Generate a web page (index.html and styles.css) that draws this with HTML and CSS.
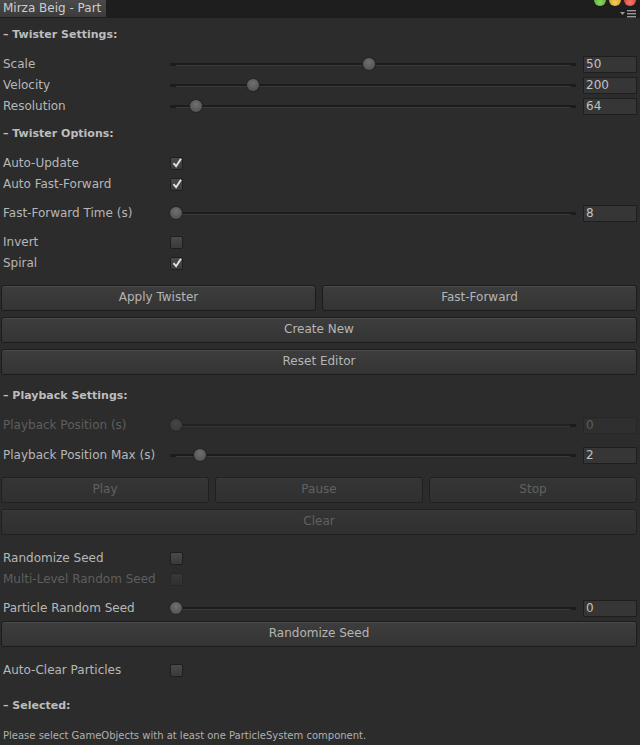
FILE: index.html
```html
<!doctype html>
<html>
    <head>
        <meta charset="UTF-8" />
        <title>Mirza Beig - Part</title>
        <link rel="stylesheet" href="styles.css">
    </head>
    <body>
        <div class="toolbar">
            <div class="tab">Mirza Beig - Part</div>
            <div class="window-controls">
                <div class="lights">
                    <span class="light green"></span>
                    <span class="light yellow"></span>
                    <span class="light red"></span>
                </div>
                <!-- tab menu -->
                <svg class="tab-menu" viewBox="0 0 16 8">
                    <path fill="#9a9a9a" d="M0 2h5L2.5 5z" />
                    <rect x="7" y="0" width="9" height="1.4" fill="#9a9a9a" />
                    <rect x="7" y="3" width="9" height="1.4" fill="#9a9a9a" />
                    <rect x="7" y="6" width="9" height="1.4" fill="#9a9a9a" />
                </svg>
            </div>
        </div>

        <div class="content">
            <!-- Twister settings -->
            <div class="header first">&ndash; Twister Settings:</div>
            <div class="group">
                <div class="row">
                    <div class="label">Scale</div>
                    <div class="slider"><div class="track"><span class="thumb" style="left: 49%"></span></div></div>
                    <div class="field">50</div>
                </div>
                <div class="row">
                    <div class="label">Velocity</div>
                    <div class="slider"><div class="track"><span class="thumb" style="left: 19.5%"></span></div></div>
                    <div class="field">200</div>
                </div>
                <div class="row">
                    <div class="label">Resolution</div>
                    <div class="slider"><div class="track"><span class="thumb" style="left: 5%"></span></div></div>
                    <div class="field">64</div>
                </div>
            </div>

            <!-- Twister options -->
            <div class="header">&ndash; Twister Options:</div>
            <div class="group">
                <div class="row">
                    <div class="label">Auto-Update</div>
                    <div class="checkbox"><svg viewBox="0 0 12 12"><path d="M2.5 6.2l2.6 3L10 1.8" /></svg></div>
                </div>
                <div class="row">
                    <div class="label">Auto Fast-Forward</div>
                    <div class="checkbox"><svg viewBox="0 0 12 12"><path d="M2.5 6.2l2.6 3L10 1.8" /></svg></div>
                </div>
            </div>
            <div class="group">
                <div class="row">
                    <div class="label">Fast-Forward Time (s)</div>
                    <div class="slider"><div class="track"><span class="thumb" style="left: 0%"></span></div></div>
                    <div class="field">8</div>
                </div>
            </div>
            <div class="group">
                <div class="row">
                    <div class="label">Invert</div>
                    <div class="checkbox"></div>
                </div>
                <div class="row">
                    <div class="label">Spiral</div>
                    <div class="checkbox"><svg viewBox="0 0 12 12"><path d="M2.5 6.2l2.6 3L10 1.8" /></svg></div>
                </div>
            </div>

            <div class="buttons">
                <div class="button-row two">
                    <div class="button">Apply Twister</div>
                    <div class="button">Fast-Forward</div>
                </div>
                <div class="button">Create New</div>
                <div class="button">Reset Editor</div>
            </div>

            <!-- Playback settings -->
            <div class="header after-buttons">&ndash; Playback Settings:</div>
            <div class="group">
                <div class="row disabled">
                    <div class="label">Playback Position (s)</div>
                    <div class="slider"><div class="track"><span class="thumb" style="left: 0%"></span></div></div>
                    <div class="field">0</div>
                </div>
            </div>
            <div class="group wide">
                <div class="row">
                    <div class="label">Playback Position Max (s)</div>
                    <div class="slider"><div class="track"><span class="thumb" style="left: 6%"></span></div></div>
                    <div class="field">2</div>
                </div>
            </div>

            <div class="buttons">
                <div class="button-row three">
                    <div class="button disabled">Play</div>
                    <div class="button disabled">Pause</div>
                    <div class="button disabled">Stop</div>
                </div>
                <div class="button disabled">Clear</div>
            </div>

            <div class="group after-buttons">
                <div class="row">
                    <div class="label">Randomize Seed</div>
                    <div class="checkbox"></div>
                </div>
                <div class="row disabled">
                    <div class="label">Multi-Level Random Seed</div>
                    <div class="checkbox"></div>
                </div>
            </div>
            <div class="group">
                <div class="row">
                    <div class="label">Particle Random Seed</div>
                    <div class="slider"><div class="track"><span class="thumb" style="left: 0%"></span></div></div>
                    <div class="field">0</div>
                </div>
            </div>
            <div class="buttons tight">
                <div class="button">Randomize Seed</div>
            </div>

            <div class="group after-buttons">
                <div class="row">
                    <div class="label">Auto-Clear Particles</div>
                    <div class="checkbox"></div>
                </div>
            </div>

            <!-- Selection -->
            <div class="header loose">&ndash; Selected:</div>
            <div class="help">Please select GameObjects with at least one ParticleSystem component.</div>
        </div>
    </body>
</html>
```

FILE: styles.css
```css
body {
    font-family: "DejaVu Sans", "Liberation Sans", sans-serif;
    margin: 0;
    padding: 0;
    background-color: #2c2c2c;
    color: #b7b7b7;
    font-size: 12px;
    width: 640px;
    height: 745px;
    overflow: hidden;
}

.toolbar {
    height: 18px;
    background-color: #1e1e1e;
    display: flex;
    justify-content: space-between;
    align-items: flex-start;
}

.tab {
    width: 103px;
    height: 17px;
    line-height: 16px;
    padding-left: 3px;
    color: #cdcdcd;
    background: linear-gradient(#4a4a4a, #3c3c3c);
    white-space: nowrap;
}

.window-controls {
    width: 46px;
    display: flex;
    flex-direction: column;
    align-items: flex-end;
    padding-right: 4px;
}

.lights {
    display: flex;
    gap: 3px;
    margin-top: -6px;
}

.light {
    width: 12px;
    height: 12px;
    border-radius: 50%;
}

.light.green {
    background: radial-gradient(circle at 50% 70%, #8fd660, #3f9a2a);
}

.light.yellow {
    background: radial-gradient(circle at 50% 70%, #f2cc5a, #c48b16);
}

.light.red {
    background: radial-gradient(circle at 50% 70%, #f27a6a, #c42e25);
}

.tab-menu {
    width: 16px;
    height: 8px;
    margin-top: 4px;
}

.content {
    padding: 7px 3px 0 1px;
}

.header {
    height: 20px;
    line-height: 20px;
    padding-left: 2px;
    font-size: 11px;
    font-weight: bold;
    color: #bdbdbd;
    margin-top: 8px;
}

.header.first {
    margin-top: 0;
}

.header.after-buttons {
    margin-top: 11px;
}

.header.loose {
    margin-top: 16px;
}

.group {
    display: flex;
    flex-direction: column;
    gap: 1px;
    margin-top: 9px;
}

.group.wide {
    margin-top: 10px;
}

.group.after-buttons {
    margin-top: 13px;
}

.row {
    height: 20px;
    display: flex;
    align-items: center;
}

.label {
    width: 167px;
    padding-left: 2px;
    white-space: nowrap;
}

.row.disabled .label {
    color: #5e5e5e;
}

.slider {
    flex: 1;
    height: 14px;
    display: flex;
    align-items: center;
}

.track {
    flex: 1;
    height: 2px;
    margin: 0 6px;
    position: relative;
    background-color: #1c1c1c;
    border-bottom: 1px solid #3b3b3b;
    box-shadow: -6px 0 0 #1c1c1c, 6px 0 0 #1c1c1c;
}

.thumb {
    position: absolute;
    top: -5px;
    width: 12px;
    height: 12px;
    border-radius: 50%;
    transform: translateX(-50%);
    background: radial-gradient(circle at 50% 35%, #707070, #4b4b4b);
    box-shadow: 0 0 0 1px #252525;
}

.row.disabled .thumb {
    background: radial-gradient(circle at 50% 35%, #454545, #373737);
}

.row.disabled .track {
    background-color: #222;
    border-bottom-color: #333;
}

.field {
    width: 50px;
    height: 15px;
    line-height: 15px;
    margin-left: 7px;
    padding-left: 2px;
    background-color: #363636;
    border: 1px solid #1e1e1e;
    color: #c2c2c2;
}

.row.disabled .field {
    background-color: #2f2f2f;
    border-color: #262626;
    color: #5e5e5e;
}

.checkbox {
    width: 11px;
    height: 11px;
    border: 1px solid #1f1f1f;
    border-radius: 2px;
    background: linear-gradient(#4a4a4a, #3a3a3a);
}

.row.disabled .checkbox {
    background: linear-gradient(#383838, #303030);
    border-color: #262626;
}

.checkbox svg {
    display: block;
    width: 12px;
    height: 12px;
    margin: -1px 0 0 0;
}

.checkbox path {
    fill: none;
    stroke: #e0e0e0;
    stroke-width: 2;
}

.buttons {
    display: flex;
    flex-direction: column;
    gap: 6px;
    margin-top: 12px;
}

.buttons.tight {
    margin-top: 3px;
}

.button-row {
    display: grid;
    gap: 6px;
}

.button-row.two {
    grid-template-columns: 1fr 1fr;
}

.button-row.three {
    grid-template-columns: 1fr 1fr 1fr;
}

.button {
    height: 24px;
    line-height: 23px;
    text-align: center;
    font-size: 12px;
    color: #b5b5b5;
    background: linear-gradient(#3d3d3d, #343434);
    border: 1px solid #1b1b1b;
    border-radius: 3px;
    box-shadow: inset 0 1px 0 rgba(255, 255, 255, 0.08);
}

.button.disabled {
    color: #616161;
    background: linear-gradient(#353535, #303030);
    border-color: #202020;
    box-shadow: inset 0 1px 0 rgba(255, 255, 255, 0.03);
}

.help {
    margin-top: 12px;
    height: 16px;
    line-height: 16px;
    padding-left: 2px;
    font-size: 10px;
    color: #b0b0b0;
    white-space: nowrap;
}
```
